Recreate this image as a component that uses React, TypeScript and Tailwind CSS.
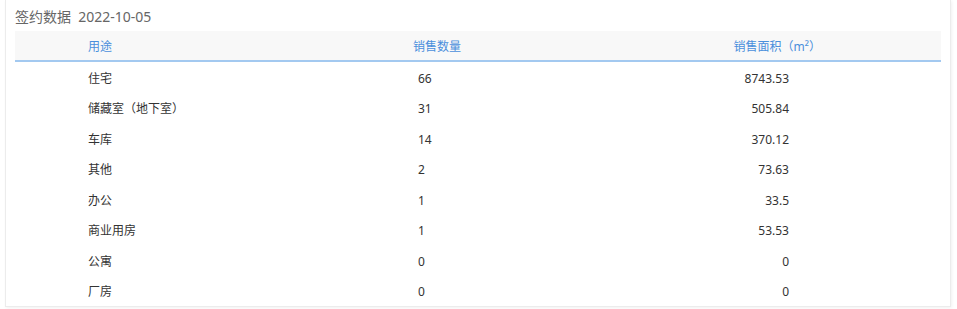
const rows = [
  { use: '住宅', count: 66, area: '8743.53' },
  { use: '储藏室（地下室）', count: 31, area: '505.84' },
  { use: '车库', count: 14, area: '370.12' },
  { use: '其他', count: 2, area: '73.63' },
  { use: '办公', count: 1, area: '33.5' },
  { use: '商业用房', count: 1, area: '53.53' },
  { use: '公寓', count: 0, area: '0' },
  { use: '厂房', count: 0, area: '0' },
];

export default function App() {
  return (
    <div className="w-[957px] h-[309px] bg-white font-['Noto_Sans','Noto_Sans_CJK_SC',sans-serif]">
      <div className="ml-[5px] w-[946px] h-[307px] bg-white border-x border-b border-[#ececec] shadow-[1px_1px_3px_rgba(0,0,0,0.06)]">
        {/* 标题 */}
        <div className="h-[31px] pl-[9px] pt-[5px] text-[14px] leading-[24px] text-[#666]">
          签约数据&nbsp;&nbsp;2022-10-05
        </div>

        {/* 表格 */}
        <div className="mx-[9px] w-[926px]">
          <div className="flex h-[31px] items-center pt-[2px] bg-[#f8f8f8] border-b-2 border-[#a3c9f0] text-[12px] text-[#4a8fdc]">
            <div className="w-[398px] pl-[73px]">用途</div>
            <div className="w-[245px]">销售数量</div>
            <div className="w-[163px] text-right">销售面积（m²）</div>
          </div>
          {rows.map(r => (
            <div key={r.use} className="flex h-[30.5px] items-center pt-[3px] text-[12px] text-[#333]">
              <div className="w-[398px] pl-[73px]">{r.use}</div>
              <div className="w-[5px]" />
              <div className="w-[242px]">{r.count}</div>
              <div className="w-[129px] text-right">{r.area}</div>
            </div>
          ))}
        </div>
      </div>
    </div>
  );
}
